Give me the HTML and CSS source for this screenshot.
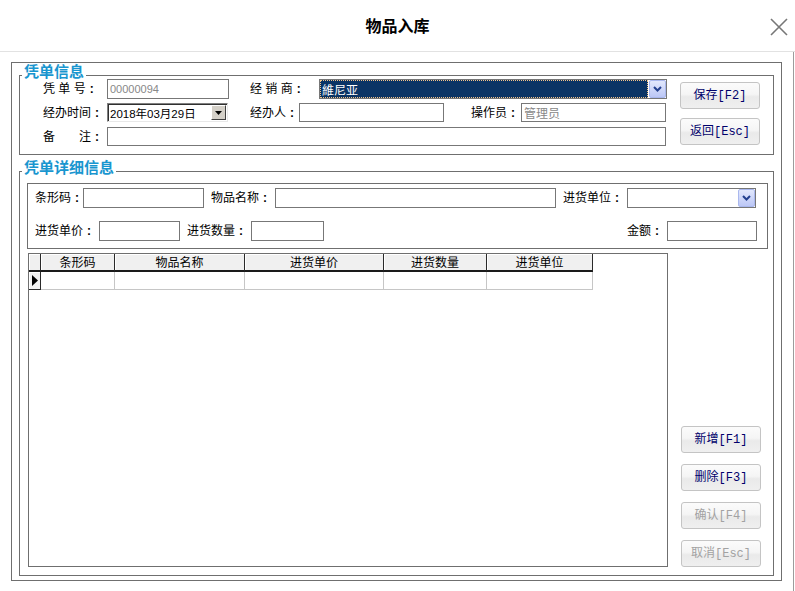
FILE: index.html
```html
<!DOCTYPE html>
<html lang="zh-CN">
<head>
<meta charset="utf-8">
<title>物品入库</title>
<link rel="stylesheet" href="styles.css">
</head>
<body>
<div class="window">
  <header class="titlebar">
    <h1 class="title">物品入库</h1>
    <button class="close" aria-label="关闭">
      <svg width="18" height="18" viewBox="0 0 18 18"><path d="M1 1L17 17M17 1L1 17" stroke="#777" stroke-width="1.6" fill="none"/></svg>
    </button>
  </header>

  <div class="client">
    <div class="frame">

      <section class="group group-main">
        <span class="legend">凭单信息</span>
        <div class="main-body">
          <div class="form">
            <div class="row row-1">
              <span class="lbl lbl-a">凭 单 号<i class="colon">:</i></span>
              <div class="field f-no"><span class="num muted">00000094</span></div>
              <span class="lbl lbl-b">经 销 商<i class="colon">:</i></span>
              <div class="combo combo-sel f-dealer">
                <span class="combo-text">維尼亚</span>
                <span class="drop"><svg width="9" height="6" viewBox="0 0 9 6"><path d="M1 1L4.5 4.5L8 1" stroke="#23408f" stroke-width="2" fill="none"/></svg></span>
              </div>
            </div>
            <div class="row row-2">
              <span class="lbl lbl-a">经办时间<i class="colon">:</i></span>
              <div class="date f-date">
                <span class="date-text">2018年03月29日</span>
                <span class="date-btn"><svg width="7" height="4" viewBox="0 0 7 4"><path d="M0 0H7L3.5 4Z" fill="#000"/></svg></span>
              </div>
              <span class="lbl lbl-c">经办人<i class="colon">:</i></span>
              <div class="field f-agent"></div>
              <span class="lbl lbl-d">操作员<i class="colon">:</i></span>
              <div class="field f-op"><span class="muted">管理员</span></div>
            </div>
            <div class="row row-3">
              <span class="lbl lbl-a">备&emsp;&emsp;注<i class="colon">:</i></span>
              <div class="field f-note"></div>
            </div>
          </div>
          <div class="side side-top">
            <button class="btn">保存[F2]</button>
            <button class="btn">返回[Esc]</button>
          </div>
        </div>
      </section>

      <section class="group group-detail">
        <span class="legend">凭单详细信息</span>
        <div class="detail-body">
          <div class="search">
            <div class="srow">
              <span class="lbl s-l4">条形码<i class="colon">:</i></span>
              <div class="field s-code"></div>
              <span class="lbl s-l5 gap7">物品名称<i class="colon">:</i></span>
              <div class="field s-name"></div>
              <span class="lbl s-l5 gap7">进货单位<i class="colon">:</i></span>
              <div class="combo s-unit">
                <span class="combo-text plain"></span>
                <span class="drop"><svg width="9" height="6" viewBox="0 0 9 6"><path d="M1 1L4.5 4.5L8 1" stroke="#23408f" stroke-width="2" fill="none"/></svg></span>
              </div>
            </div>
            <div class="srow">
              <span class="lbl s-l5">进货单价<i class="colon">:</i></span>
              <div class="field s-price"></div>
              <span class="lbl s-l5 gap7">进货数量<i class="colon">:</i></span>
              <div class="field s-qty"></div>
              <span class="spacer"></span>
              <span class="lbl s-l3">金额<i class="colon">:</i></span>
              <div class="field s-amount"></div>
            </div>
          </div>

          <div class="lower">
            <div class="grid">
              <div class="grid-row">
                <div class="hcell"></div>
                <div class="hcell">条形码</div>
                <div class="hcell">物品名称</div>
                <div class="hcell">进货单价</div>
                <div class="hcell">进货数量</div>
                <div class="hcell">进货单位</div>
              </div>
              <div class="grid-row">
                <div class="icell"><svg width="6" height="11" viewBox="0 0 6 11"><path d="M0 0L6 5.5L0 11Z" fill="#000"/></svg></div>
                <div class="dcell"></div>
                <div class="dcell"></div>
                <div class="dcell"></div>
                <div class="dcell"></div>
                <div class="dcell"></div>
              </div>
            </div>
            <div class="side side-bottom">
              <button class="btn">新增[F1]</button>
              <button class="btn">删除[F3]</button>
              <button class="btn" disabled>确认[F4]</button>
              <button class="btn" disabled>取消[Esc]</button>
            </div>
          </div>
        </div>
      </section>

    </div>
  </div>
</div>
</body>
</html>
```

FILE: styles.css
```css
* { box-sizing: border-box; }
html, body { margin: 0; padding: 0; }
body {
  width: 795px;
  height: 591px;
  overflow: hidden;
  background: #fff;
  color: #000;
  font-family: "Noto Sans CJK SC", "Liberation Sans", sans-serif;
  font-size: 12px;
}

/* title bar */
.titlebar {
  height: 52px;
  border-bottom: 1px solid #e2e2e2;
  display: grid;
  grid-template-columns: 1fr auto 1fr;
  align-items: center;
}
.title {
  grid-column: 2;
  margin: 0 0 1px 0;
  font-size: 16px;
  font-weight: bold;
  line-height: 20px;
}
.close {
  grid-column: 3;
  justify-self: end;
  align-self: start;
  margin: 18px 7px 0 0;
  padding: 0;
  border: 0;
  background: none;
  width: 18px;
  height: 18px;
  display: block;
}
.close svg { display: block; }

/* client area */
.client {
  width: 794px;
  height: 539px;
  border-right: 1px solid #9c9c9c;
  padding: 10px 0 0 11px;
}
.frame {
  width: 771px;
  height: 519px;
  border: 1px solid #6f6f6f;
  padding: 12px 7px 4px 7px;
  display: flex;
  flex-direction: column;
}

.group {
  position: relative;
  border: 1px solid #6f6f6f;
}
.group-main { height: 80px; }
.group-detail { height: 405px; margin-top: 16px; }

.legend {
  position: absolute;
  left: 2px;
  top: -11px;
  padding: 0 2px;
  background: #fff;
  color: #1996cf;
  font-family: "Liberation Sans", "Noto Sans CJK SC", sans-serif;
  font-weight: bold;
  font-size: 15px;
  line-height: 14px;
}

/* main group */
.main-body { display: flex; height: 100%; }
.form {
  width: 647px;
  padding: 3px 0 0 23px;
  display: flex;
  flex-direction: column;
}
.row { display: flex; align-items: stretch; }
.row-1 { height: 20px; }
.row-2 { height: 19px; margin-top: 4px; }
.row-3 { height: 19px; margin-top: 5px; }

.lbl {
  white-space: pre;
  align-self: center;
  height: 12px;
  line-height: 12px;
  font-family: "Liberation Sans", "Noto Sans CJK SC", sans-serif;
}
.colon {
  display: inline-block;
  width: 12px;
  text-align: center;
  font-style: normal;
  font-family: "Liberation Sans", sans-serif;
  font-weight: bold;
  font-size: 12px;
  line-height: 12px;
}
.lbl-a { width: 64px; }
.lbl-b { width: 69px; margin-left: 21px; }
.lbl-c { width: 49px; margin-left: 22px; }
.lbl-d { width: 50px; margin-left: 27px; }

.field {
  border: 1px solid #777;
  background: #fff;
  display: flex;
  align-items: center;
  padding-left: 2px;
  height: 100%;
}
.muted { color: #888; }
.num { font-family: "Liberation Sans", sans-serif; font-size: 11px; }

.f-no { width: 122px; }
.f-dealer { width: 348px; }
.f-date { width: 121px; }
.f-agent { width: 145px; }
.f-op { width: 145px; }
.f-note { width: 559px; }

/* combo box */
.combo {
  display: flex;
  border: 1px solid #777;
  background: #fff;
  height: 100%;
}
.combo-text {
  flex: 1;
  display: flex;
  align-items: center;
  padding-left: 2px;
}
.combo-sel .combo-text {
  background: #0a3465;
  color: #fff;
  outline: 1px dotted #f3c48a;
  outline-offset: -1px;
}
.drop {
  width: 17px;
  margin-left: 1px;
  background: linear-gradient(#e2e8fd, #bcc7f6);
  border: 1px solid #aab8ee;
  border-radius: 2px;
  display: flex;
  align-items: center;
  justify-content: center;
}
.drop svg { display: block; }

/* date picker */
.date {
  display: flex;
  height: 100%;
  border-top: 1px solid #808080;
  border-left: 1px solid #808080;
  border-right: 1px solid #e8e8e8;
  border-bottom: 1px solid #e8e8e8;
  box-shadow: inset 1px 1px 0 #303030;
  background: #fff;
}
.date-text {
  flex: 1;
  display: flex;
  align-items: center;
  padding-left: 2px;
  font-family: "Liberation Sans", "Noto Sans CJK SC", sans-serif;
  font-size: 11.5px;
}
.date-btn {
  width: 15px;
  margin: 1px 1px 1px 0;
  background: #d4d0c8;
  border-top: 1px solid #fff;
  border-left: 1px solid #fff;
  border-right: 1px solid #404040;
  border-bottom: 1px solid #404040;
  display: flex;
  align-items: center;
  justify-content: center;
}
.date-btn svg { display: block; }

/* buttons */
.side {
  width: 80px;
  display: flex;
  flex-direction: column;
}
.side-top { margin-left: 13px; padding-top: 6px; gap: 9px; }
.side-bottom { margin-left: 13px; justify-content: flex-end; gap: 11px; }
.btn {
  width: 80px;
  height: 27px;
  padding: 0;
  border: 1px solid #c4c4c4;
  border-radius: 3px;
  background: linear-gradient(#fbfbfb 0%, #f5f5f5 45%, #eaeaea 55%, #efefef 100%);
  color: #00006b;
  font-family: "Liberation Mono", "Noto Sans CJK SC", monospace;
  font-size: 12px;
  line-height: 16px;
}
.btn:disabled { color: #a2a2a2; }

/* detail group */
.detail-body {
  display: flex;
  flex-direction: column;
  height: 100%;
  padding: 11px 5px 8px 7px;
}
.search {
  height: 66px;
  border: 1px solid #6f6f6f;
  padding: 4px 10px 0 7px;
}
.srow { display: flex; height: 20px; }
.srow + .srow { margin-top: 13px; }
.gap7 { margin-left: 7px; }
.s-l3 { width: 40px; }
.s-l4 { width: 48px; }
.s-l5 { width: 64px; }
.s-code { width: 121px; }
.s-name { width: 281px; }
.s-unit { width: 129px; }
.s-price { width: 81px; }
.s-qty { width: 73px; }
.s-amount { width: 90px; }
.spacer { flex: 1; }

.lower {
  display: flex;
  flex: 1;
  margin-top: 4px;
  padding-left: 1px;
}
.grid {
  width: 640px;
  height: 100%;
  border: 1px solid #6f6f6f;
  background: #fff;
}
.grid-row {
  display: grid;
  grid-template-columns: 12px 74px 130px 139px 103px 106px;
}
.hcell {
  height: 18px;
  background: #f0f0f0;
  border-right: 1px solid #2a2a2a;
  border-bottom: 2px solid #1a1a1a;
  box-shadow: inset 1px 1px 0 #fff;
  text-align: center;
  line-height: 16px;
}
.dcell {
  height: 18px;
  border-right: 1px solid #c6c6c6;
  border-bottom: 1px solid #c6c6c6;
}
.icell {
  height: 18px;
  background: #f0f0f0;
  border-right: 1px solid #2a2a2a;
  border-bottom: 1px solid #2a2a2a;
  box-shadow: inset 1px 1px 0 #fff;
  display: flex;
  align-items: center;
  justify-content: center;
}
.icell svg { display: block; }
```
